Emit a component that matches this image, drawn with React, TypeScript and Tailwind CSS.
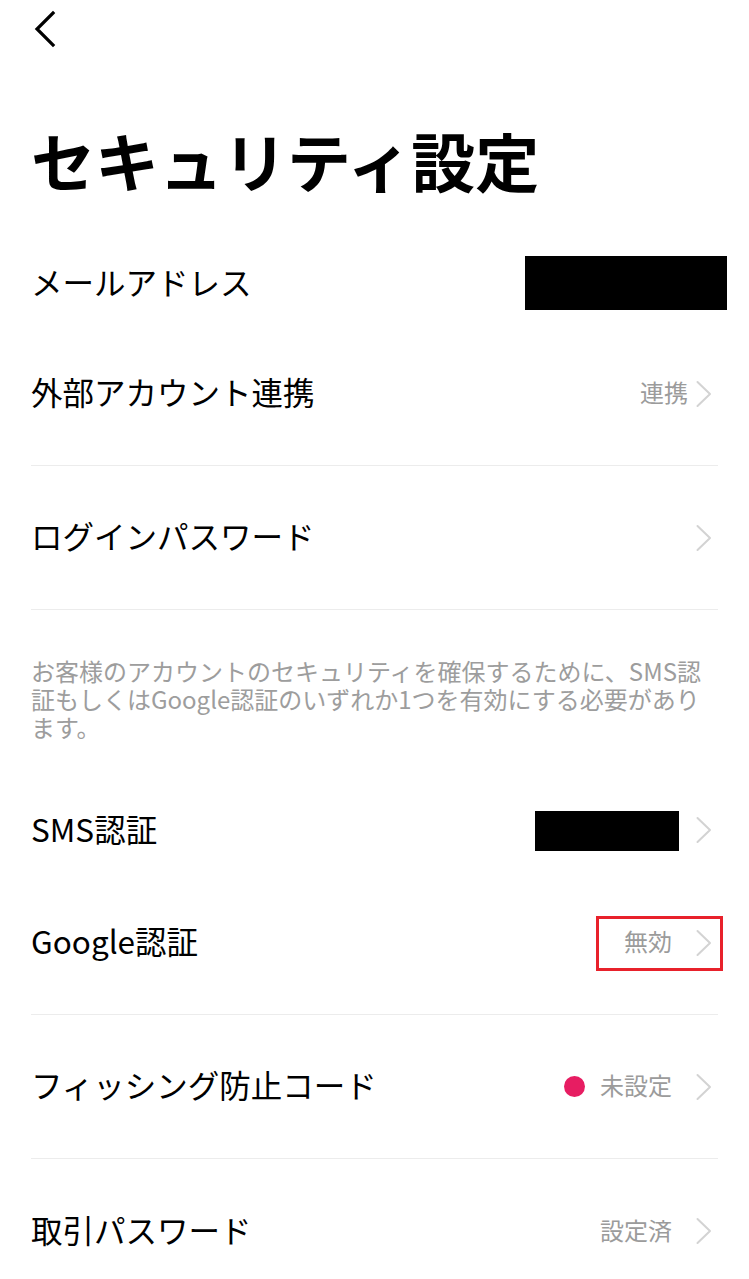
import React from "react";

function Chevron() {
  return (
    <svg width="22" height="28" viewBox="0 0 22 28" className="shrink-0 block">
      <path d="M1.5 2 L14 14 L1.5 26" fill="none" stroke="#d3d3d3" strokeWidth="2" strokeLinecap="round" strokeLinejoin="round" />
    </svg>
  );
}

function Row({
  label,
  right,
  border = true,
  height = "h-[144px]",
}: {
  label: string;
  right?: React.ReactNode;
  border?: boolean;
  height?: string;
}) {
  return (
    <div className={`${height} flex items-center justify-between ${border ? "border-b border-[#ececec]" : ""}`}>
      <span className="text-[31.5px] leading-[40px] text-black mb-[5px]">{label}</span>
      <div className="flex items-center">{right}</div>
    </div>
  );
}

export default function App() {
  return (
    <div className="w-[749px] min-h-[1279px] bg-white text-black font-['Noto_Sans_CJK_JP',sans-serif] overflow-hidden">
      <header className="h-[58px]">
        <svg width="60" height="58" viewBox="0 0 60 58" className="block">
          <path d="M53 13 L37 29 L53 45" fill="none" stroke="#000" strokeWidth="3.2" strokeLinecap="square" strokeLinejoin="miter" />
        </svg>
      </header>

      <h1 className="pt-[63px] pl-[31px] text-[64px] leading-[76px] font-bold">セキュリティ設定</h1>

      <div className="px-[31px] mt-[47px]">
        <Row
          label="メールアドレス"
          border={false}
          height="h-[78px]"
          right={<div className="w-[202px] h-[54px] bg-black -mr-[9px]" />}
        />
        <Row
          label="外部アカウント連携"
          right={
            <>
              <span className="text-[24px] leading-[34px] text-[#9b9b9b] mr-[8px] mb-[3px]">連携</span>
              <Chevron />
            </>
          }
        />
        <Row label="ログインパスワード" right={<Chevron />} />

        <div className="pt-[47px] pb-[48px] text-[24px] leading-[28px] text-[#9d9d9d] whitespace-nowrap">
          <div className="h-[28px]">お客様のアカウントのセキュリティを確保するために、SMS認</div>
          <div className="h-[28px]">証もしくはGoogle認証のいずれか1つを有効にする必要があり</div>
          <div className="h-[28px]">ます。</div>
        </div>

        <Row
          label="SMS認証"
          border={false}
          height="h-[82px]"
          right={
            <>
              <div className="w-[144px] h-[40px] bg-black mr-[17px] mt-[1px]" />
              <Chevron />
            </>
          }
        />
        <Row
          label="Google認証"
          right={
            <div className="relative flex items-center">
              <span className="text-[24px] leading-[34px] text-[#9b9b9b] mr-[24px] mb-[3px]">無効</span>
              <Chevron />
              <div className="absolute -left-[28px] -right-[5px] -top-[8px] -bottom-[10px] border-[3px] border-[#e8212b]" />
            </div>
          }
        />
        <Row
          label="フィッシング防止コード"
          right={
            <>
              <span className="w-[21px] h-[21px] rounded-full bg-[#e71d62] mr-[15px]" />
              <span className="text-[24px] leading-[34px] text-[#9b9b9b] mr-[24px] mb-[3px]">未設定</span>
              <Chevron />
            </>
          }
        />
        <Row
          label="取引パスワード"
          border={false}
          right={
            <>
              <span className="text-[24px] leading-[34px] text-[#9b9b9b] mr-[24px] mb-[3px]">設定済</span>
              <Chevron />
            </>
          }
        />
      </div>
    </div>
  );
}
